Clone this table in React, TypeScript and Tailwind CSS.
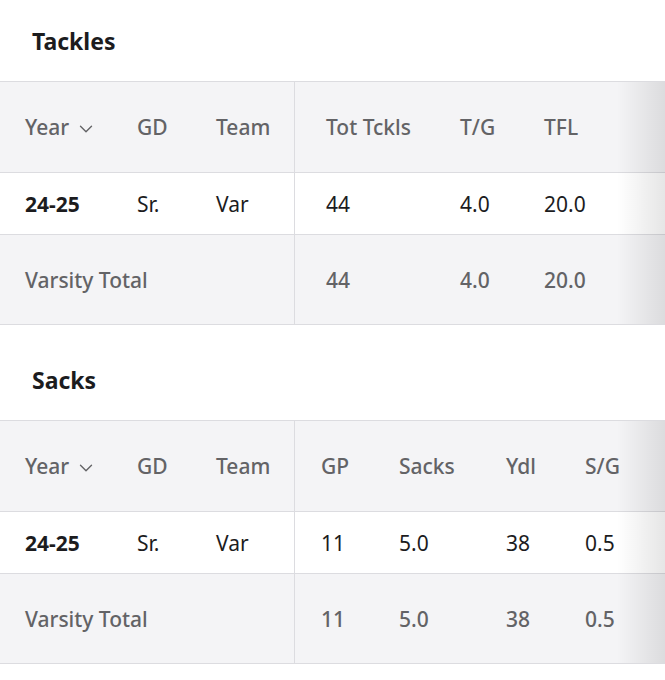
import { ChevronDown } from "lucide-react";

type Col = { label: string; w: string; pl?: string };

type StatTable = {
  title: string;
  cols: Col[];
  row: string[];
  total: string[];
};

const tables: StatTable[] = [
  {
    title: "Tackles",
    cols: [
      { label: "Tot Tckls", w: "w-[165px]", pl: "pl-[31px]" },
      { label: "T/G", w: "w-[84px]" },
      { label: "TFL", w: "flex-1" },
    ],
    row: ["44", "4.0", "20.0"],
    total: ["44", "4.0", "20.0"],
  },
  {
    title: "Sacks",
    cols: [
      { label: "GP", w: "w-[104px]", pl: "pl-[26px]" },
      { label: "Sacks", w: "w-[107px]" },
      { label: "Ydl", w: "w-[79px]" },
      { label: "S/G", w: "flex-1" },
    ],
    row: ["11", "5.0", "38", "0.5"],
    total: ["11", "5.0", "38", "0.5"],
  },
];

function StatsSection({ table, first }: { table: StatTable; first?: boolean }) {
  return (
    <section className={first ? "" : "mt-[14px]"}>
      <h2 className="h-[81px] pl-[32px] pt-[25px] text-[23px] font-bold leading-[32px] text-[#1c1c1e]">
        {table.title}
      </h2>
      <div className="relative border-y border-[#dcdce0] text-[21px]">
        {/* header */}
        <div className="flex h-[90px] items-center bg-[#f4f4f6] font-medium text-[#636366]">
          <div className="flex h-full w-[294px] items-center pt-[2px]">
            <div className="flex w-[137px] items-center pl-[25px]">
              Year
              <ChevronDown size={22} strokeWidth={1.5} className="ml-[6px] mt-[1px] text-[#636366]" />
            </div>
            <div className="w-[79px]">GD</div>
            <div className="w-[78px]">Team</div>
          </div>
          <div className="flex h-full flex-1 items-center border-l border-[#dcdce0] pt-[2px]">
            {table.cols.map((c) => (
              <div key={c.label} className={`${c.w} ${c.pl ?? ""}`}>
                {c.label}
              </div>
            ))}
          </div>
        </div>
        {/* season row */}
        <div className="flex h-[62px] items-center border-t border-[#dcdce0] bg-white text-[#1c1c1e]">
          <div className="flex h-full w-[294px] items-center pt-[2px]">
            <div className="w-[137px] pl-[25px] font-bold">24-25</div>
            <div className="w-[79px]">Sr.</div>
            <div className="w-[78px]">Var</div>
          </div>
          <div className="flex h-full flex-1 items-center border-l border-[#dcdce0] pt-[2px]">
            {table.cols.map((c, i) => (
              <div key={c.label} className={`${c.w} ${c.pl ?? ""}`}>
                {table.row[i]}
              </div>
            ))}
          </div>
        </div>
        {/* total row */}
        <div className="flex h-[90px] items-center border-t border-[#dcdce0] bg-[#f4f4f6] font-medium text-[#636366]">
          <div className="flex h-full w-[294px] items-center pl-[25px] pt-[3px]">Varsity Total</div>
          <div className="flex h-full flex-1 items-center border-l border-[#dcdce0] pt-[3px]">
            {table.cols.map((c, i) => (
              <div key={c.label} className={`${c.w} ${c.pl ?? ""}`}>
                {table.total[i]}
              </div>
            ))}
          </div>
        </div>
        <div className="pointer-events-none absolute inset-y-0 right-0 w-[48px] bg-gradient-to-r from-transparent to-black/10" />
      </div>
    </section>
  );
}

export default function App() {
  return (
    <div className="h-[680px] w-[665px] overflow-hidden bg-white font-['Noto_Sans',sans-serif]">
      {tables.map((t, i) => (
        <StatsSection key={t.title} table={t} first={i === 0} />
      ))}
    </div>
  );
}
